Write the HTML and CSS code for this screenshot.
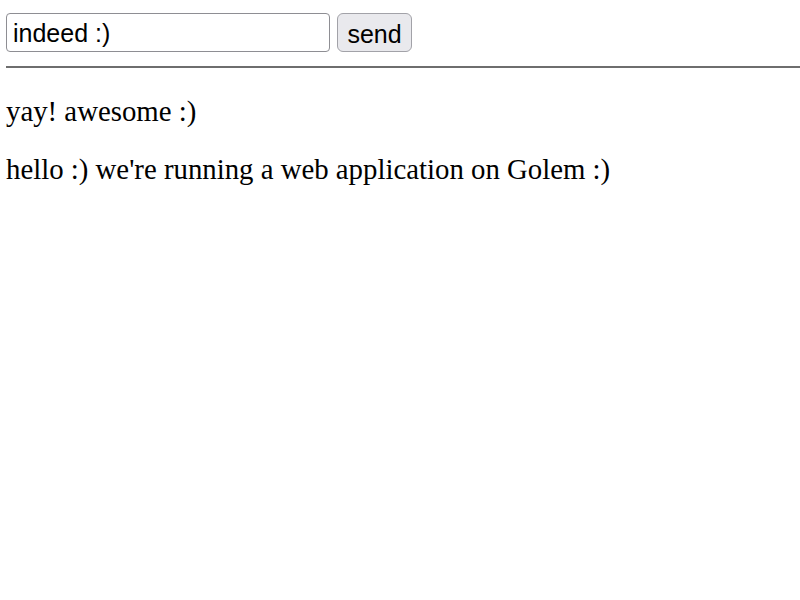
FILE: index.html
```html
<!DOCTYPE html>
<html>
<head>
<meta charset="utf-8">
<link rel="stylesheet" href="styles.css">
</head>
<body>
<form class="chat-form">
  <input class="chat-input" type="text" value="indeed :)">
  <button class="chat-send" type="button">send</button>
</form>
<hr class="divider">
<div class="messages">
  <p class="msg">yay! awesome :)</p>
  <p class="msg">hello :) we're running a web application on Golem :)</p>
</div>
</body>
</html>
```
FILE: styles.css
```css
html, body { background: #fff; }
body {
  margin: 0 0 0 6px;
  font-family: "Liberation Serif", "Times New Roman", serif;
  font-size: 28.8px;
  color: #000;
}
.chat-form {
  display: flex;
  align-items: stretch;
  gap: 7px;
  padding-top: 13px;
}
.chat-input {
  box-sizing: border-box;
  width: 324px;
  height: 39px;
  margin: 0;
  padding: 2px 6px 0 6px;
  border: 1px solid #8e8e93;
  border-radius: 4px;
  font-family: "Liberation Sans", Arial, sans-serif;
  font-size: 25px;
  color: #000;
  background: #fff;
  outline: none;
}
.chat-send {
  box-sizing: border-box;
  width: 75px;
  height: 39px;
  margin: 0;
  padding: 3px 8px 0 8px;
  border: 1px solid #a2a2a8;
  border-radius: 6px;
  background: #e9e9ed;
  font-family: "Liberation Sans", Arial, sans-serif;
  font-size: 25px;
  color: #000;
}
.divider {
  margin: 14px 0 0 0;
  border: 0;
  border-top: 2px solid #6e6e6e;
  height: 0;
}
.messages { padding-top: 29px; }
.msg { margin: 0 0 29px 0; line-height: 29px; }
```
